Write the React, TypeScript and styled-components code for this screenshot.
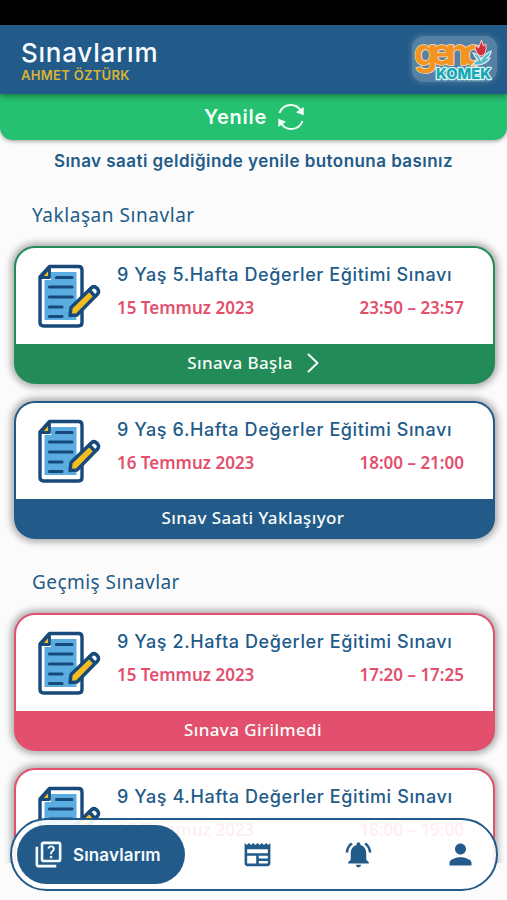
import React from 'react';
import styled, { createGlobalStyle } from 'styled-components';
import { MdOutlineQuiz, MdOutlineNewspaper, MdNotificationsActive, MdPerson } from 'react-icons/md';

const NAVY = '#225b89';
const ROSE = '#e3506e';
const GREEN = '#238b57';
const BODY = 'Inter, "Liberation Sans", sans-serif';
const ROUND = '"Noto Sans", "Open Sans", sans-serif';

const GlobalStyle = createGlobalStyle`
  * { box-sizing: border-box; }
  body { margin: 0; background: #fbfbfb; font-family: ${BODY}; overflow: hidden; }
`;

const Screen = styled.div`
  position: relative;
  width: 507px;
  height: 900px;
  overflow: hidden;
  background: #fbfbfb;
  display: flex;
  flex-direction: column;
`;

const StatusBar = styled.div`
  height: 25px;
  flex: none;
  background: #000;
`;

const Header = styled.header`
  height: 69px;
  flex: none;
  z-index: 1;
  display: flex;
  justify-content: space-between;
  padding: 11px 10px 0 21px;
  background: ${NAVY};
  box-shadow: 0 2px 6px rgba(0, 0, 0, 0.4);
`;

const Title = styled.h1`
  margin: 0;
  font-size: 26px;
  line-height: 33px;
  font-weight: 500;
  letter-spacing: 0.75px;
  color: #f7fbff;
`;

const Student = styled.div`
  font-size: 13px;
  line-height: 13px;
  font-weight: 600;
  letter-spacing: 0.3px;
  color: #d9b432;
`;

const LogoPlate = styled.div`
  width: 85px;
  height: 46px;
  border-radius: 12px;
  background: rgba(255, 255, 255, 0.23);
  box-shadow: 0 0 5px 2px rgba(255, 255, 255, 0.12);

  svg { display: block; overflow: visible; }
`;

const Refresh = styled.button`
  height: 46px;
  flex: none;
  display: flex;
  align-items: center;
  justify-content: center;
  gap: 10px;
  border: 0;
  padding: 0 0 0 2px;
  border-radius: 0 0 13px 13px;
  background: #25c070;
  box-shadow: 0 1px 4px rgba(0, 0, 0, 0.4);
  color: #f4fff8;
  font: 600 20px/24px ${BODY};
  letter-spacing: 0.7px;
`;

const Hint = styled.p`
  margin: 10px 0 0;
  text-align: center;
  font-size: 17px;
  line-height: 22px;
  font-weight: 600;
  letter-spacing: 0.45px;
  white-space: nowrap;
  color: ${NAVY};
`;

const ExamList = styled.main`
  height: 691px;
  flex: none;
  overflow: hidden;
`;

const Section = styled.section`
  display: flex;
  flex-direction: column;
  gap: 17px;
  padding: 30px 12px 0 14px;
`;

const SectionTitle = styled.h2<{ $spacing: number }>`
  margin: 0 0 1px;
  padding-left: 18px;
  font: 400 19px/26px ${ROUND};
  letter-spacing: ${p => p.$spacing}px;
  color: ${NAVY};
`;

const Card = styled.article<{ $tone: string }>`
  height: 138px;
  flex: none;
  display: flex;
  flex-direction: column;
  border: 2px solid ${p => p.$tone};
  border-radius: 21px;
  background: ${p => p.$tone};
  box-shadow: 0 0 7px 3px rgba(0, 0, 0, 0.32);
`;

const CardBody = styled.div`
  height: 96px;
  display: flex;
  gap: 16px;
  padding: 16px 29px 0 21px;
  border-radius: 19px 19px 0 0;
  background: #fff;

  svg { flex: none; }
`;

const Details = styled.div`
  flex: 1;
  min-width: 0;
`;

const ExamName = styled.h3`
  margin: -1px 0 0;
  font-size: 18px;
  line-height: 24px;
  font-weight: 500;
  letter-spacing: 0.6px;
  white-space: nowrap;
  color: ${NAVY};
`;

const Schedule = styled.div`
  display: flex;
  justify-content: space-between;
  margin-top: 9px;
  font: 600 17px/23px ${ROUND};
  color: ${ROSE};
`;

const CardAction = styled.div`
  flex: 1;
  display: flex;
  align-items: center;
  justify-content: center;
  gap: 14px;
  padding-right: 3px;
  font: 500 17px/24px ${ROUND};
  letter-spacing: 0.4px;
  color: #f8fcfa;
`;

const Nav = styled.nav`
  position: absolute;
  left: 10px;
  right: 9px;
  bottom: 9px;
  height: 73px;
  display: flex;
  align-items: center;
  padding: 0 19px 0 5px;
  border: 2px solid ${NAVY};
  border-radius: 37px;
  background: rgba(255, 255, 255, 0.91);
  color: ${NAVY};
`;

const ActiveTab = styled.div`
  width: 168px;
  height: 59px;
  display: flex;
  align-items: center;
  gap: 9px;
  padding-left: 16px;
  border-radius: 30px;
  background: ${NAVY};
  color: #f4f9fd;
  font-size: 17px;
  font-weight: 600;
  letter-spacing: 0.15px;
`;

const Tabs = styled.div`
  flex: 1;
  display: flex;
  align-items: center;
  justify-content: space-between;
  padding-left: 57px;
`;

function DocumentIcon() {
  return (
    <svg width="64" height="66" viewBox="0 0 64 66" fill="none" stroke="#174a7a" strokeWidth="3.4" strokeLinejoin="round" strokeLinecap="round">
      <path d="M12.5 2.500H41.5Q45 2.500 45 6V58.500Q45 62 41.500 62H6.500Q3 62 3 58.500V13Z" fill="#fff" />
      <path d="M14 8H39.500V56H7.500V16H14Z" fill="#5aace1" stroke="none" />
      <path d="M12.500 3.500V13.500H3.500Z" fill="#f3bc22" strokeWidth="2.800" />
      <path d="M19.500 13.500H35M12.500 23H35M12.500 33H35M12.500 43H25M12.500 52.500H25" strokeWidth="3.200" />
      <path d="M33 51.500L34 43.500L54.500 23.800Q57 21.500 59.500 24L60.500 25Q62.500 27.500 60.500 30L40 51Z" fill="#f6bd21" />
      <path d="M52.300 26L55 23.500Q57 21.500 59.500 24L60.500 25Q62.500 27.500 60.500 30L58 32.300Z" fill="#fff" />
    </svg>
  );
}

function RefreshIcon() {
  return (
    <svg width="28" height="28" viewBox="0 0 28 28" fill="none" stroke="#f4fff8" strokeWidth="2">
      <path d="M2.500 10Q5.500 2 14 2Q20.500 2 24 8M25.500 18Q22.500 26 14 26Q7.500 26 4 20" />
      <path d="M26.700 4V12.300L19 9.300ZM1.300 24V15.700L9 18.700Z" fill="#f4fff8" stroke="none" />
    </svg>
  );
}

function Chevron() {
  return (
    <svg width="12" height="20" viewBox="0 0 12 20" fill="none" stroke="#f8fcfa" strokeWidth="2" strokeLinecap="round" strokeLinejoin="round">
      <path d="M1.500 1.500L10.500 10L1.500 18.500" />
    </svg>
  );
}

function Logo() {
  return (
    <svg width="85" height="46" viewBox="0 0 85 46">
      <g fontFamily="Inter, sans-serif" strokeLinejoin="round" paintOrder="stroke">
        <text x="2" y="29" fontSize="37" fontWeight="700" letterSpacing="-6.8" fill="#f39422" stroke="#f8dfbb" strokeWidth="1.600">genç</text>
        <text x="24" y="42.500" fontSize="14" fontWeight="800" fill="#16a7b4" stroke="#d9f5f5" strokeWidth="2.400" textLength="55" lengthAdjust="spacingAndGlyphs">KOMEK</text>
      </g>
      <path d="M60 29Q63 25 66 24Q63 21 61 17Q67 18 69 24Q72 18 79 15Q79 19 75 22L78 22Q75 28 66 29Z" fill="#5bbcc9" stroke="#def3f5" strokeWidth="1.200" />
      <path d="M63 9L66.500 12L69.500 4L71.500 10L74 8Q75 19 69 20Q63 18 63 9Z" fill="#d52e3b" stroke="#f7cdd1" strokeWidth="1" />
    </svg>
  );
}

interface ExamProps {
  name: string;
  date: string;
  time: string;
  status?: string;
  tone: string;
  startable?: boolean;
}

function ExamCard({ name, date, time, status, tone, startable }: ExamProps) {
  return (
    <Card $tone={tone}>
      <CardBody>
        <DocumentIcon />
        <Details>
          <ExamName>{name}</ExamName>
          <Schedule><span>{date}</span><span>{time}</span></Schedule>
        </Details>
      </CardBody>
      <CardAction>{status}{startable && <Chevron />}</CardAction>
    </Card>
  );
}

export default function App() {
  return (
    <>
      <GlobalStyle />
      <Screen>
        <StatusBar />
        <Header>
          <div>
            <Title>Sınavlarım</Title>
            <Student>AHMET ÖZTÜRK</Student>
          </div>
          <LogoPlate><Logo /></LogoPlate>
        </Header>
        <Refresh>Yenile<RefreshIcon /></Refresh>
        <Hint>Sınav saati geldiğinde yenile butonuna basınız</Hint>
        <ExamList>
          <Section>
            <SectionTitle $spacing={0.55}>Yaklaşan Sınavlar</SectionTitle>
            <ExamCard name="9 Yaş 5.Hafta Değerler Eğitimi Sınavı" date="15 Temmuz 2023" time="23:50 – 23:57" status="Sınava Başla" tone={GREEN} startable />
            <ExamCard name="9 Yaş 6.Hafta Değerler Eğitimi Sınavı" date="16 Temmuz 2023" time="18:00 – 21:00" status="Sınav Saati Yaklaşıyor" tone={NAVY} />
          </Section>
          <Section>
            <SectionTitle $spacing={0.45}>Geçmiş Sınavlar</SectionTitle>
            <ExamCard name="9 Yaş 2.Hafta Değerler Eğitimi Sınavı" date="15 Temmuz 2023" time="17:20 – 17:25" status="Sınava Girilmedi" tone={ROSE} />
            <ExamCard name="9 Yaş 4.Hafta Değerler Eğitimi Sınavı" date="15 Temmuz 2023" time="18:00 – 19:00" tone={ROSE} />
          </Section>
        </ExamList>
        <Nav>
          <ActiveTab><MdOutlineQuiz size={31} />Sınavlarım</ActiveTab>
          <Tabs>
            <MdOutlineNewspaper size={31} />
            <MdNotificationsActive size={31} />
            <MdPerson size={33} />
          </Tabs>
        </Nav>
      </Screen>
    </>
  );
}
